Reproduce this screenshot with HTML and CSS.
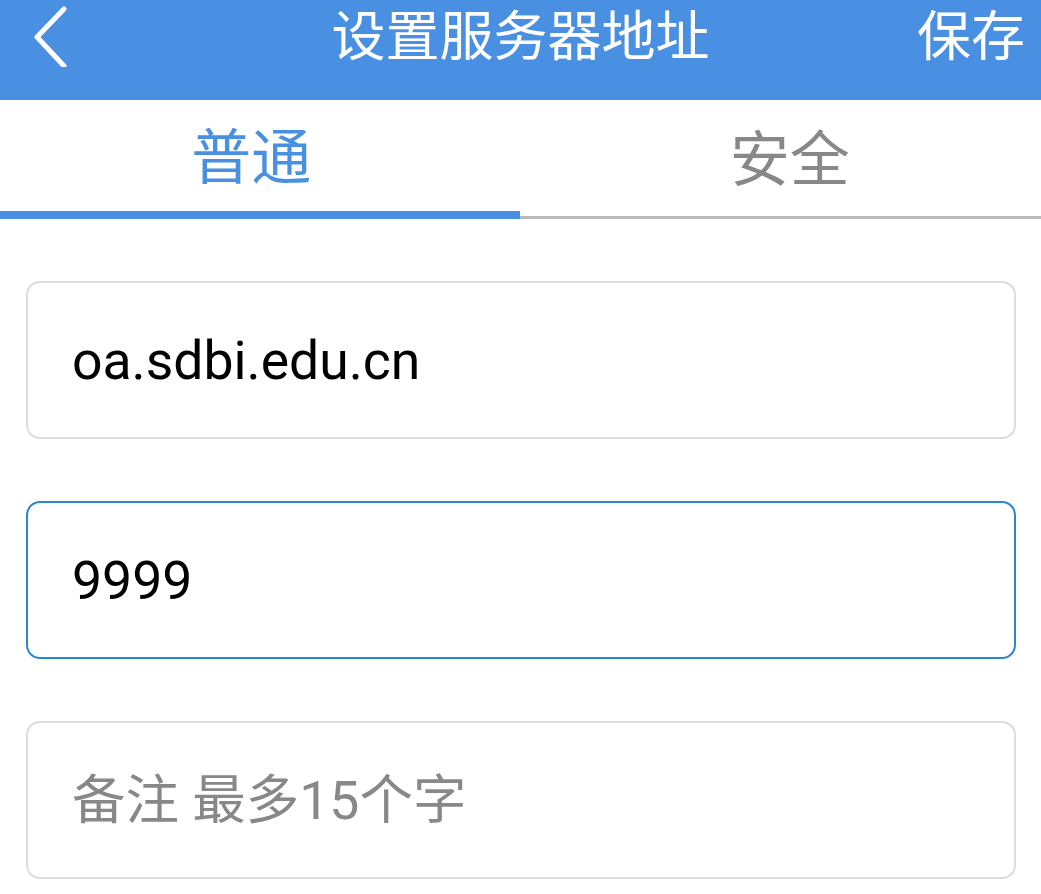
FILE: index.html
```html
<!DOCTYPE html>
<html lang="zh-CN">
<head>
    <meta charset="UTF-8">
    <meta name="viewport" content="width=device-width, initial-scale=1.0">
    <title>设置服务器地址</title>
    <link rel="stylesheet" href="styles.css">
</head>
<body>

    <!-- Barra superior -->
    <div class="top-bar">
        <a href="#" class="back-btn">
            <svg width="40" height="64" viewBox="0 0 40 64">
                <polyline points="33,6 6,34 33,63" fill="none" stroke="#fff" stroke-width="5" stroke-linecap="round" stroke-linejoin="round"/>
            </svg>
        </a>
        <div class="title">设置服务器地址</div>
        <a href="#" class="save-btn">保存</a>
    </div>

    <!-- Abas -->
    <div class="tabs">
        <div class="tab active">普通</div>
        <div class="tab second">安全</div>
    </div>

    <!-- Campos -->
    <div class="form">
        <input class="field" type="text" value="oa.sdbi.edu.cn">
        <input class="field focused" type="text" value="9999">
        <input class="field" type="text" placeholder="备注 最多15个字">
    </div>

</body>
</html>
```

FILE: styles.css
```css
* {
    margin: 0;
    padding: 0;
    box-sizing: border-box;
}
body, html {
    height: 100%;
    background: #fff;
    font-family: Roboto, "Noto Sans CJK SC", sans-serif;
}

/* Barra azul do topo */
.top-bar {
    height: 100px;
    background-color: #4a90e2;
    display: flex;
    align-items: flex-start;
    color: #fff;
}
.back-btn {
    display: block;
    width: 140px;
    padding: 3px 0 0 31px;
}
.title {
    flex: 1;
    text-align: center;
    font-size: 54px;
    line-height: 76px;
    white-space: nowrap;
}
.save-btn {
    width: 140px;
    text-align: right;
    padding-right: 16px;
    color: #fff;
    text-decoration: none;
    font-size: 54px;
    line-height: 76px;
    white-space: nowrap;
}

/* Abas */
.tabs {
    display: flex;
    height: 119px;
}
.tab {
    flex: 1;
    text-align: center;
    font-size: 60px;
    padding-top: 7px;
    line-height: 108px;
    color: #888;
    border-bottom: 3px solid #bbb;
    white-space: nowrap;
}
.tab.active {
    color: #4a90e2;
    border-bottom: 8px solid #4a90e2;
    padding-right: 17px;
    line-height: 103px;
}
.tab.second {
    padding-left: 19px;
}

/* Campos do formulário */
.form {
    display: flex;
    flex-direction: column;
    gap: 62px;
    padding: 62px 25px 0 26px;
}
.field {
    height: 158px;
    width: 100%;
    border: 2px solid #dcdcdc;
    border-radius: 14px;
    padding: 0 44px;
    font-family: Roboto, "Noto Sans CJK SC", sans-serif;
    font-size: 53.5px;
    color: #000;
    outline: none;
    background: #fff;
}
.field.focused {
    border-color: #2a86d6;
}
.field::placeholder {
    color: #888;
}
```
